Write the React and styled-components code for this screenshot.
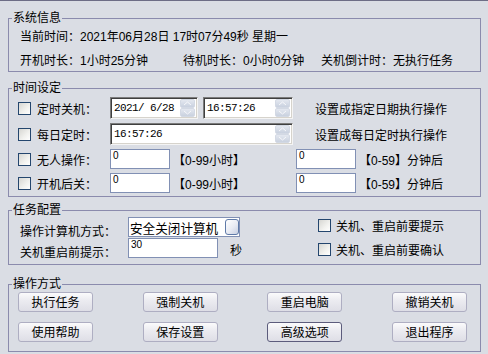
import React from 'react';
import styled, { createGlobalStyle } from 'styled-components';

const Global = createGlobalStyle`
  html, body { margin: 0; padding: 0; background: #dadde4; }
  body {
    font-family: "Liberation Sans", "Noto Sans CJK SC", sans-serif;
    font-size: 12px;
    color: #000;
  }
`;

const Window = styled.div`
  width: 488px;
  height: 354px;
  box-sizing: border-box;
  border-top: 1px solid #6d6d86;
  background: #dadde4;
  padding: 10px 0 0 8px;
  display: flex;
  flex-direction: column;
  overflow: hidden;
`;

const Group = styled.fieldset`
  margin: ${(p) => p.$top || 0}px 0 0 0;
  width: 473px;
  box-sizing: border-box;
  border: 1px solid #8b8bad;
  padding: 0;
  min-width: 0;
`;

const Legend = styled.legend`
  padding: 0 1px;
  margin-left: 3px;
  line-height: 14px;
  font-size: 12px;
`;

const Body = styled.div`
  padding: ${(p) => p.$pad};
  display: flex;
  flex-direction: column;
  gap: ${(p) => p.$gap || 0}px;
`;

const InfoRow = styled.div`
  height: 20px;
  display: flex;
  align-items: center;
  white-space: nowrap;
`;

const InfoCell = styled.span`
  width: ${(p) => (p.$w ? `${p.$w}px` : 'auto')};
  flex: none;
`;

const Row = styled.div`
  height: ${(p) => p.$h}px;
  display: flex;
  align-items: center;
  white-space: nowrap;
`;

const Check = styled.span`
  width: 13px;
  height: 13px;
  box-sizing: border-box;
  flex: none;
  border: 1px solid #24466e;
  background: linear-gradient(135deg, #d6d6d2 0%, #f2f2ef 60%, #ffffff 100%);
  margin-right: ${(p) => (p.$gap ?? 6)}px;
`;

const Label = styled.span`
  width: 73px;
  flex: none;
`;

const DateBox = styled.div`
  width: ${(p) => p.$w}px;
  height: 22px;
  margin-left: ${(p) => p.$ml || 0}px;
  box-sizing: border-box;
  flex: none;
  display: flex;
  align-items: center;
  background: #fff;
  border: 1px solid;
  border-color: #7b7b7b #f4f4f4 #f4f4f4 #7b7b7b;
  box-shadow: inset 1px 1px 0 #3f3f3f, inset -1px -1px 0 #d6d3cc;
  padding: 0 2px 0 2px;
`;

const MonoText = styled.span`
  flex: 1;
  font-family: "Liberation Mono", monospace;
  font-size: 11px;
  letter-spacing: -0.6px;
  padding-left: 1px;
`;

const SpinCol = styled.div`
  width: 15px;
  height: 18px;
  flex: none;
  display: flex;
  flex-direction: column;
`;

const SpinBtn = styled.div`
  flex: 1;
  border-radius: 2px;
  background: linear-gradient(#e4e8f0, #c9d1df);
  border: 1px solid #d3d9e4;
  box-sizing: border-box;
  display: flex;
  align-items: center;
  justify-content: center;
`;

const Spinner = () => (
  <SpinCol>
    <SpinBtn>
      <svg width="9" height="5" viewBox="0 0 9 5">
        <polyline points="1,4 4.5,1 8,4" fill="none" stroke="#f7f8fb" strokeWidth="1" />
      </svg>
    </SpinBtn>
    <SpinBtn>
      <svg width="9" height="5" viewBox="0 0 9 5">
        <polyline points="1,1 4.5,4 8,1" fill="none" stroke="#f7f8fb" strokeWidth="1" />
      </svg>
    </SpinBtn>
  </SpinCol>
);

const Hint = styled.span`
  margin-left: ${(p) => p.$ml || 0}px;
  font-size: 12px;
  flex: none;
`;

const RangeHint = styled.span`
  width: ${(p) => (p.$w ? `${p.$w}px` : 'auto')};
  margin-left: ${(p) => p.$ml || 0}px;
  flex: none;
`;

const NumBox = styled.div`
  width: ${(p) => p.$w}px;
  height: 20px;
  box-sizing: border-box;
  flex: none;
  background: #fff;
  border: 1px solid #8190b4;
  font-family: "Liberation Sans", sans-serif;
  font-size: 10px;
  line-height: 12px;
  padding: 0 2px;
`;

const ConfigBody = styled.div`
  display: flex;
  padding: 0 0 6px 11px;
`;

const ConfigLeft = styled.div`
  width: 298px;
  flex: none;
  display: flex;
  flex-direction: column;
  gap: 1px;
`;

const ConfigRow = styled.div`
  height: 20px;
  display: flex;
  align-items: flex-start;
  white-space: nowrap;
`;

const ConfigLabel = styled.span`
  width: 108px;
  flex: none;
  line-height: 14px;
  padding-top: 8px;
`;

const Combo = styled.div`
  width: 112px;
  height: 20px;
  box-sizing: border-box;
  background: #fff;
  border: 1px solid #8190b4;
  display: flex;
  align-items: center;
  justify-content: space-between;
  padding: 0 0 0 1px;
  font-family: "Noto Sans CJK SC", sans-serif;
  font-size: 12.6px;
`;

const ComboBtn = styled.span`
  width: 14px;
  height: 16px;
  box-sizing: border-box;
  border: 1px solid #5f7aa8;
  border-radius: 3px;
  background: linear-gradient(135deg, #ffffff 0%, #e8ebf3 55%, #c7cfe2 100%);
`;

const Unit = styled.span`
  margin-left: 12px;
  line-height: 14px;
  padding-top: 6px;
`;

const ConfigRight = styled.div`
  display: flex;
  flex-direction: column;
  gap: 10px;
  padding-top: 1px;
`;

const CheckLine = styled.div`
  height: 14px;
  display: flex;
  align-items: center;
  white-space: nowrap;
`;

const ButtonGrid = styled.div`
  display: grid;
  grid-template-columns: repeat(4, 75px);
  grid-auto-rows: 20px;
  column-gap: 49.7px;
  row-gap: 10px;
  padding: 1px 0 9px 9px;
`;

const Btn = styled.button`
  width: 75px;
  height: 20px;
  box-sizing: border-box;
  padding: 0;
  font-family: "Noto Sans CJK SC", sans-serif;
  font-size: 12px;
  line-height: 18px;
  color: #000;
  border: 1px solid ${(p) => (p.$focused ? '#5c5c7c' : '#aeaec2')};
  border-radius: 3px;
  background: linear-gradient(#fbfbfc 0%, #ececf1 40%, #dedee6 100%);
`;

export default function App() {
  return (
    <>
      <Global />
      <Window>
        <Group>
          <Legend>系统信息</Legend>
          <Body $pad="0 0 2px 11px" $gap={4}>
            <InfoRow>当前时间：2021年06月28日 17时07分49秒 星期一</InfoRow>
            <InfoRow>
              <InfoCell $w={163}>开机时长：1小时25分钟</InfoCell>
              <InfoCell $w={138}>待机时长：0小时0分钟</InfoCell>
              <InfoCell>关机倒计时：无执行任务</InfoCell>
            </InfoRow>
          </Body>
        </Group>

        <Group $top={9}>
          <Legend>时间设定</Legend>
          <Body $pad="2px 0 3px 9px" $gap={4}>
            <Row $h={22}>
              <Check />
              <Label>定时关机：</Label>
              <DateBox $w={88}>
                <MonoText>2021/ 6/28</MonoText>
                <Spinner />
              </DateBox>
              <DateBox $w={90} $ml={5}>
                <MonoText>16:57:26</MonoText>
                <Spinner />
              </DateBox>
              <Hint $ml={22}>设置成指定日期执行操作</Hint>
            </Row>
            <Row $h={22}>
              <Check />
              <Label>每日定时：</Label>
              <DateBox $w={183}>
                <MonoText>16:57:26</MonoText>
                <Spinner />
              </DateBox>
              <Hint $ml={22}>设置成每日定时执行操作</Hint>
            </Row>
            <Row $h={20}>
              <Check />
              <Label>无人操作：</Label>
              <NumBox $w={60}>0</NumBox>
              <RangeHint $w={123} $ml={3}>【0-99小时】</RangeHint>
              <NumBox $w={60}>0</NumBox>
              <RangeHint $ml={3}>【0-59】分钟后</RangeHint>
            </Row>
            <Row $h={20}>
              <Check />
              <Label>开机后关：</Label>
              <NumBox $w={60}>0</NumBox>
              <RangeHint $w={123} $ml={3}>【0-99小时】</RangeHint>
              <NumBox $w={60}>0</NumBox>
              <RangeHint $ml={3}>【0-59】分钟后</RangeHint>
            </Row>
          </Body>
        </Group>

        <Group $top={6}>
          <Legend>任务配置</Legend>
          <ConfigBody>
            <ConfigLeft>
              <ConfigRow>
                <ConfigLabel>操作计算机方式：</ConfigLabel>
                <Combo>
                  安全关闭计算机
                  <ComboBtn />
                </Combo>
              </ConfigRow>
              <ConfigRow>
                <ConfigLabel>关机重启前提示：</ConfigLabel>
                <NumBox $w={90}>30</NumBox>
                <Unit>秒</Unit>
              </ConfigRow>
            </ConfigLeft>
            <ConfigRight>
              <CheckLine>
                <Check $gap={5} />
                关机、重启前要提示
              </CheckLine>
              <CheckLine>
                <Check $gap={5} />
                关机、重启前要确认
              </CheckLine>
            </ConfigRight>
          </ConfigBody>
        </Group>

        <Group $top={12}>
          <Legend>操作方式</Legend>
          <ButtonGrid>
            <Btn>执行任务</Btn>
            <Btn>强制关机</Btn>
            <Btn>重启电脑</Btn>
            <Btn>撤销关机</Btn>
            <Btn>使用帮助</Btn>
            <Btn>保存设置</Btn>
            <Btn $focused>高级选项</Btn>
            <Btn>退出程序</Btn>
          </ButtonGrid>
        </Group>
      </Window>
    </>
  );
}
